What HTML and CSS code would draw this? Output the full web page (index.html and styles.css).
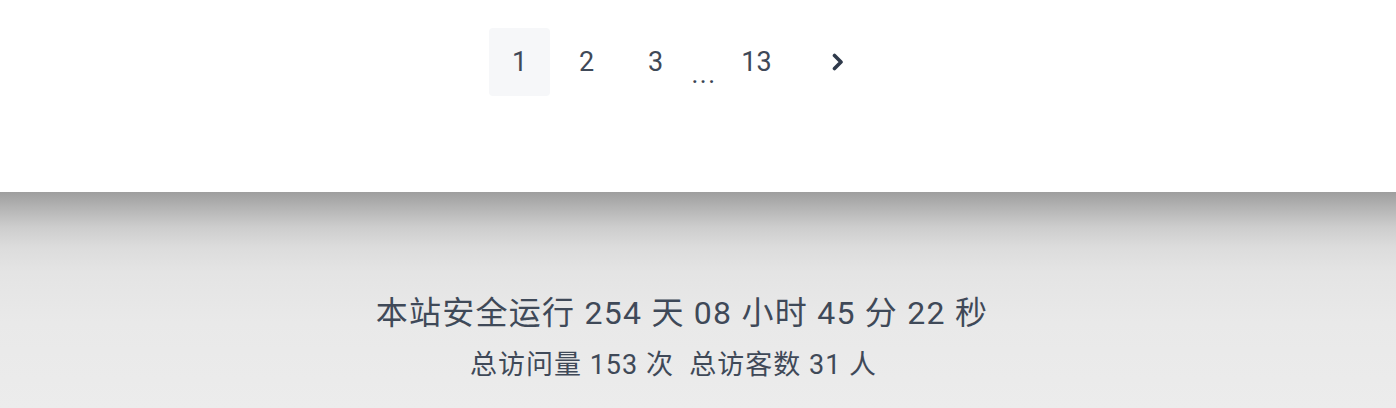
FILE: index.html
```html
<!DOCTYPE html>
<html lang="zh-CN">
<head>
<meta charset="utf-8">
<title>Pagination</title>
<link rel="stylesheet" href="styles.css">
</head>
<body>
<main class="content">
  <nav class="pager">
    <a class="page current" href="#">1</a>
    <a class="page p2" href="#">2</a>
    <a class="page p3" href="#">3</a>
    <span class="ellipsis">...</span>
    <a class="page" href="#">13</a>
    <a class="page next" href="#" aria-label="下一页">
      <svg width="12" height="18" viewBox="0 0 12 18"><path d="M2.5 2.5 L9 9 L2.5 15.5" fill="none" stroke="#2f3a4b" stroke-width="3.6" stroke-linecap="round" stroke-linejoin="round"/></svg>
    </a>
  </nav>
</main>
<footer class="footer">
  <p class="uptime">本站安全运行 254 天 08 小时 45 分 22 秒</p>
  <p class="stats">总访问量 153 次&nbsp;&nbsp;总访客数 31 人</p>
</footer>
</body>
</html>
```

FILE: styles.css
```css
* { box-sizing: border-box; }
html, body { margin: 0; padding: 0; }
body {
  background: #fff;
  font-family: Roboto, "Noto Sans CJK SC", sans-serif;
  color: #3f4958;
}
.content {
  height: 192px;
  padding-top: 28px;
}
.pager {
  display: flex;
  align-items: flex-start;
  padding-left: 489px;
}
.page {
  display: flex;
  align-items: center;
  justify-content: center;
  width: 61px;
  height: 68px;
  font-size: 27px;
  color: #3f4958;
  text-decoration: none;
  border-radius: 4px;
}
.page.current { background: #f6f7f9; }
.p2 { margin-left: 6px; }
.p3 { margin-left: 8px; }
.ellipsis {
  width: 40px;
  font-size: 26px;
  line-height: 68px;
  padding-top: 12px;
  padding-right: 4px;
  text-align: center;
  letter-spacing: 1.5px;
  color: #3a4453;
}
.next { margin-left: 20px; }
.footer {
  height: 216px;
  padding-top: 98px;
  padding-right: 32px;
  text-align: center;
  background: linear-gradient(to bottom, #9e9e9e 0, #b3b3b3 15px, #cdcdcd 35px, #dcdcdc 55px, #e4e4e4 80px, #e9e9e9 130px, #ececec 216px);
}
.footer p { margin: 0; }
.uptime {
  font-size: 32px;
  line-height: 46px;
  letter-spacing: 1.25px;
}
.stats {
  margin-top: 9px !important;
  padding-right: 17px;
  font-size: 27px;
  line-height: 40px;
  letter-spacing: 1px;
}
```
